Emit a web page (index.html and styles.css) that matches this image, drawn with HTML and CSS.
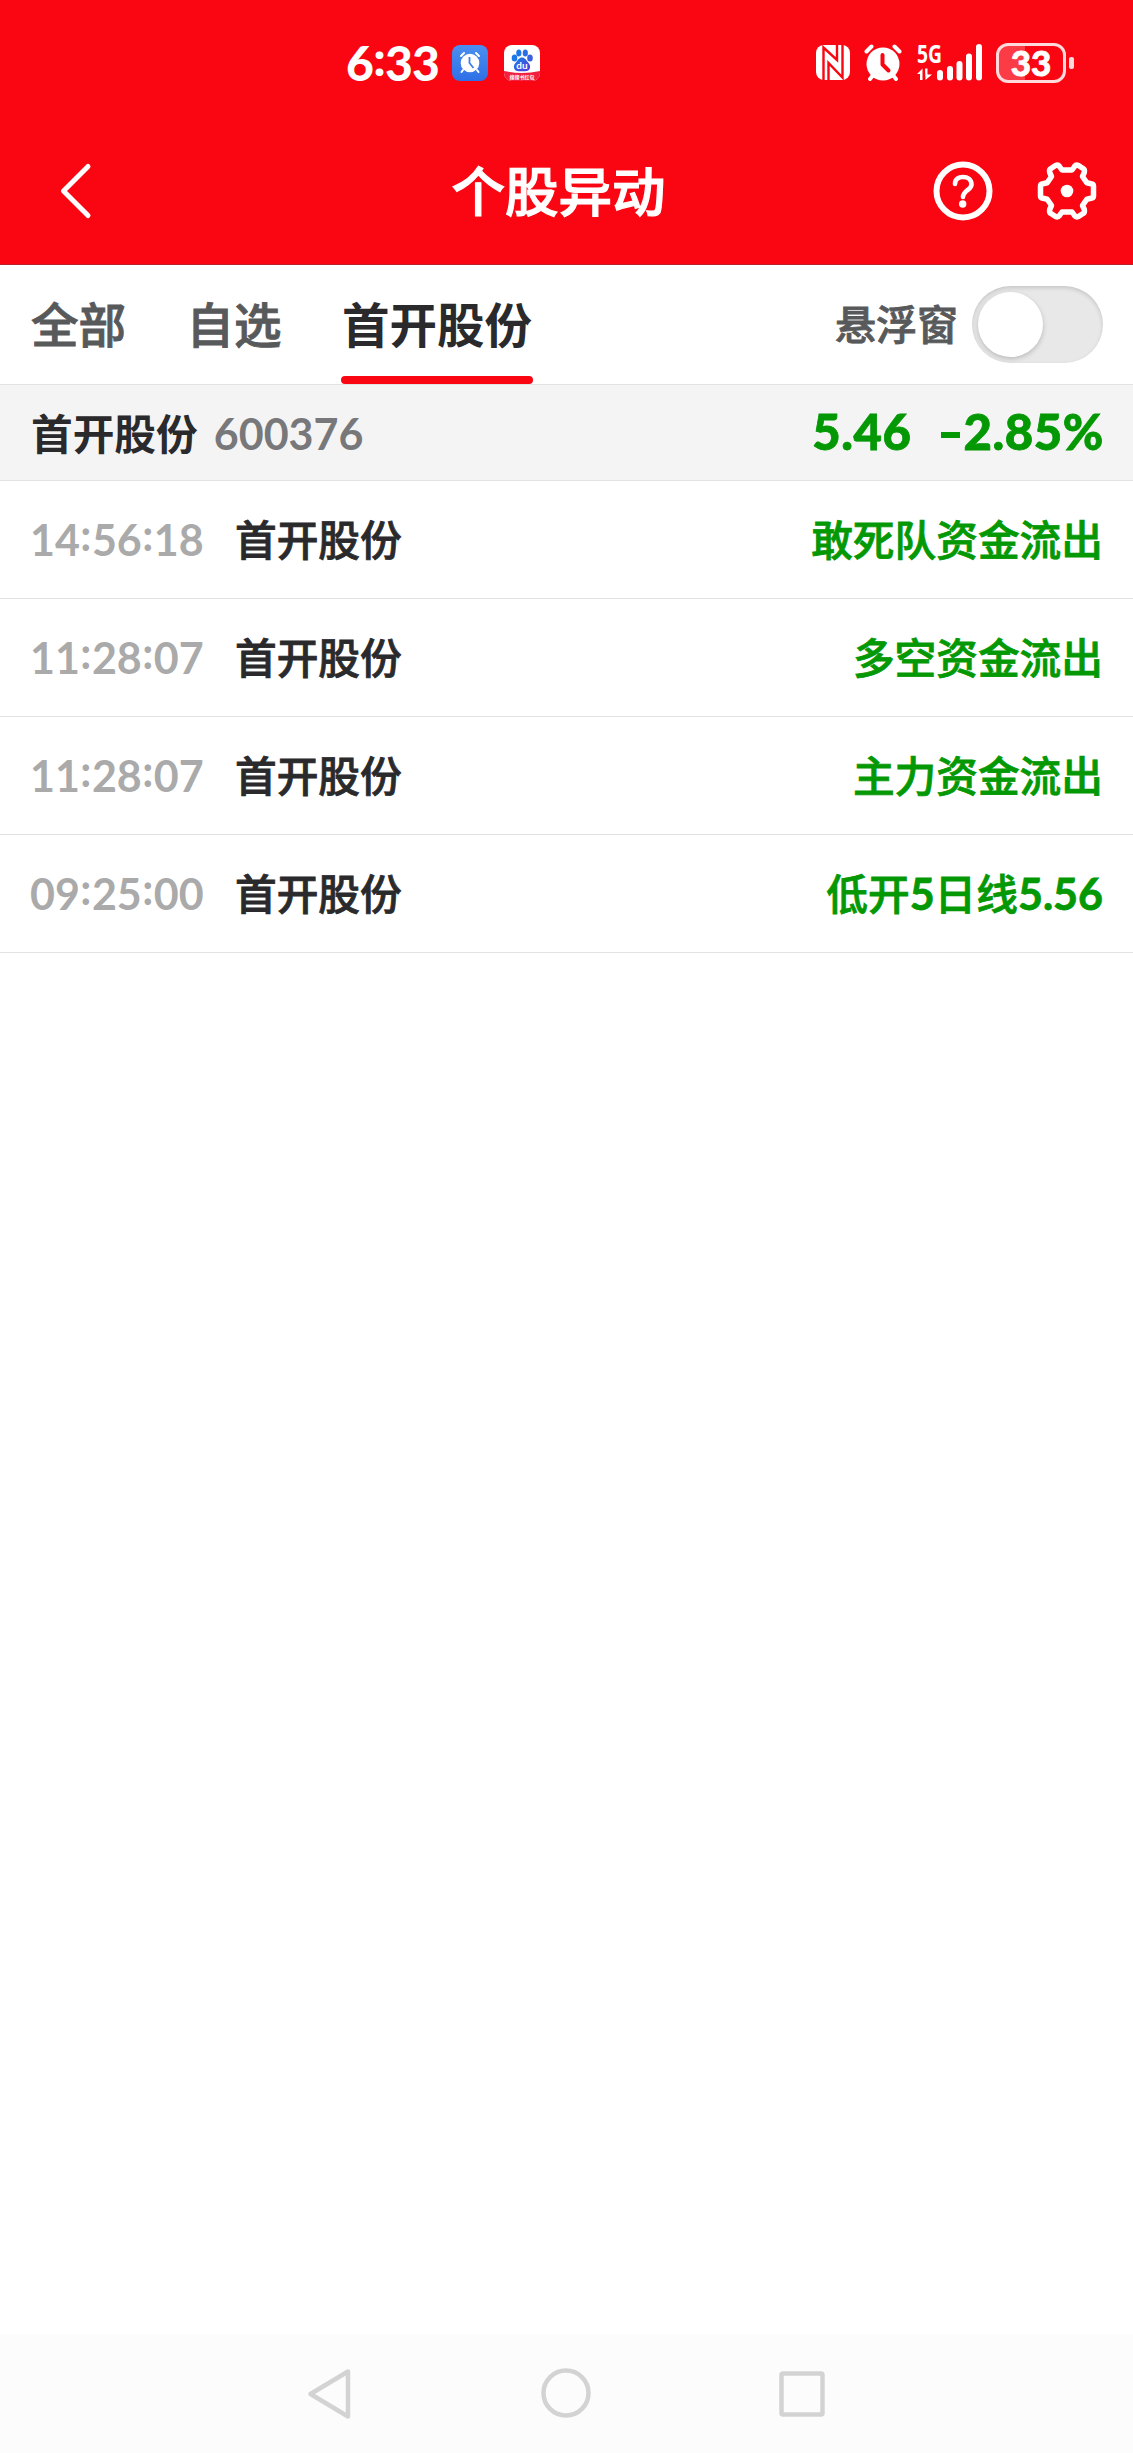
FILE: index.html
```html
<!DOCTYPE html>
<html lang="zh-CN">
<head>
    <meta charset="UTF-8">
    <meta name="viewport" content="width=device-width, initial-scale=1.0">
    <title>个股异动</title>
    <link rel="stylesheet" href="styles.css">
</head>
<body>
    <div class="page">
        <!-- Status bar -->
        <div class="status-bar">
            <div class="status-left">
                <span class="clock">6<i class="colon">:</i>33</span>
                <svg class="app-icon" width="36" height="36" viewBox="0 0 36 36">
                    <defs>
                        <linearGradient id="blue" x1="0" y1="0" x2="0" y2="1">
                            <stop offset="0" stop-color="#4b90f0"/>
                            <stop offset="1" stop-color="#2f6fe6"/>
                        </linearGradient>
                    </defs>
                    <rect width="36" height="36" rx="8" fill="url(#blue)"/>
                    <circle cx="18" cy="18" r="9.3" fill="#fff"/>
                    <path d="M9 11l3-3M27 11l-3-3M11 25l-1.5 2M25 25l1.5 2" stroke="#fff" stroke-width="2" stroke-linecap="round"/>
                    <path d="M17.5 12v6l4 5" fill="none" stroke="#3d80eb" stroke-width="1.8"/>
                </svg>
                <svg class="app-icon" width="36" height="36" viewBox="0 0 36 36">
                    <defs>
                        <clipPath id="round"><rect width="36" height="36" rx="8"/></clipPath>
                        <linearGradient id="paw" x1="0" y1="0" x2="1" y2="1">
                            <stop offset="0" stop-color="#1683e8"/>
                            <stop offset="1" stop-color="#5a35d8"/>
                        </linearGradient>
                    </defs>
                    <g clip-path="url(#round)">
                        <rect width="36" height="36" fill="#fff"/>
                        <path d="M0 26q18 4 36 0v10H0z" fill="#f2203f"/>
                        <ellipse cx="10.5" cy="13" rx="2.8" ry="3.5" fill="#1c78e8"/>
                        <ellipse cx="14.8" cy="8" rx="2.6" ry="3.6" fill="#1c78e8"/>
                        <ellipse cx="21.3" cy="8" rx="2.6" ry="3.6" fill="#2c6ee4"/>
                        <ellipse cx="26" cy="13" rx="2.8" ry="3.5" fill="#3a62e0"/>
                        <path d="M18 12.5c3 0 4 2.5 5.5 4.2 2 2 3 3.8 2.5 6-.6 3-3 3.6-8 3.6s-7.4-.6-8-3.6c-.5-2.2.5-4 2.5-6 1.5-1.7 2.5-4.2 5.5-4.2z" fill="url(#paw)"/>
                        <text class="paw-text" x="18" y="24">du</text>
                        <text class="paw-label" x="18" y="34">搜搜书红包</text>
                    </g>
                </svg>
            </div>
            <div class="status-right">
                <svg class="nfc" width="34" height="36" viewBox="0 0 34 36">
                    <rect width="34" height="35" rx="8" fill="#fff"/>
                    <path d="M7.5 35V2.5L21 15V0M26.5 0V32.5L12.500 18v17" fill="none" stroke="#fa0612" stroke-width="2.4"/>
                </svg>
                <svg class="alarm" width="38" height="38" viewBox="0 0 38 38">
                    <circle cx="19" cy="20" r="16.5" fill="#fff"/>
                    <path d="M2.5 7.5l5-5M35.5 7.5l-5-5M6 35l4-5M32 35l-4-5" stroke="#fff" stroke-width="4" stroke-linecap="round"/>
                    <path d="M18.5 11v9.5l6 6" fill="none" stroke="#fa0612" stroke-width="4" stroke-linecap="round" stroke-linejoin="round"/>
                </svg>
                <svg class="signal" width="66" height="38" viewBox="0 0 66 38">
                    <text class="signal-text" x="0" y="19" textLength="25" lengthAdjust="spacingAndGlyphs">5G</text>
                    <path d="M0 30l5.5-5.5V36H3V30zM8 24.5h2.5v6H15L8.5 36z" fill="#fff"/>
                    <path d="M23 29v4.5M33 25v8.5M42.5 20v13.5M52 12.5v21M62 3v30.5" stroke="#fff" stroke-width="6" stroke-linecap="round"/>
                </svg>
                <div class="battery"><span>33</span></div>
                <div class="battery-cap"></div>
            </div>
        </div>

        <!-- Title bar -->
        <div class="header">
            <svg class="back" width="36" height="60" viewBox="0 0 36 60">
                <path d="M30 5.5L5.5 30 30 54.5" fill="none" stroke="#fff" stroke-width="5" stroke-linecap="round" stroke-linejoin="round"/>
            </svg>
            <h1>个股异动</h1>
            <div class="header-icons">
                <svg width="60" height="60" viewBox="-30 -30 60 60">
                    <circle r="26.5" fill="none" stroke="#fff" stroke-width="6"/>
                    <path d="M-8-7C-8-12-4.5-14 0-14S8.5-11.5 8.5-6.5C8.5-1 0-.5 0 6" fill="none" stroke="#fff" stroke-width="4.6" stroke-linecap="round"/>
                    <circle cx="-.3" cy="13" r="3.7" fill="#fff"/>
                </svg>
                <svg width="60" height="60" viewBox="-30 -30 60 60">
                    <path d="M26.5-5Q26.500-7 24-7.300L19.800-8.200 15.500-14.500 17.300-18.500Q18-21.500 16-22.500L11.500-25.500Q9-26.500 7.500-24.500L5-21H-5L-7.500-24.500Q-9-26.500-11.500-25.500L-16-22.500Q-18-21.500-17.300-18.500L-15.500-14.500-19.800-8.200-24-7.300Q-26.500-7-26.500-5V5Q-26.500 7-24 7.300L-19.800 8.200-15.500 14.500-17.300 18.500Q-18 21.500-16 22.500L-11.500 25.500Q-9 26.500-7.500 24.500L-5 21H5L7.500 24.500Q9 26.500 11.500 25.500L16 22.500Q18 21.500 17.300 18.500L15.500 14.500 19.800 8.200 24 7.300Q26.500 7 26.500 5z" fill="none" stroke="#fff" stroke-width="5.5" stroke-linejoin="round"/>
                    <circle r="6.3" fill="#fff"/>
                </svg>
            </div>
        </div>

        <!-- Tabs -->
        <div class="tabs">
            <div class="tab">全部</div>
            <div class="tab">自选</div>
            <div class="tab active">首开股份</div>
            <div class="float-switch">
                <span>悬浮窗</span>
                <div class="toggle"><div class="knob"></div></div>
            </div>
        </div>

        <!-- Quote -->
        <div class="quote">
            <span class="quote-name">首开股份</span>
            <span class="quote-code">600376</span>
            <span class="quote-price">5.46</span>
            <span class="quote-change"><i class="minus"></i>2.85%</span>
        </div>

        <!-- Events -->
        <div class="list">
            <div class="row">
                <span class="time">14<i class="colon">:</i>56<i class="colon">:</i>18</span>
                <span class="name">首开股份</span>
                <span class="event">敢死队资金流出</span>
            </div>
            <div class="row">
                <span class="time">11<i class="colon">:</i>28<i class="colon">:</i>07</span>
                <span class="name">首开股份</span>
                <span class="event">多空资金流出</span>
            </div>
            <div class="row">
                <span class="time">11<i class="colon">:</i>28<i class="colon">:</i>07</span>
                <span class="name">首开股份</span>
                <span class="event">主力资金流出</span>
            </div>
            <div class="row">
                <span class="time">09<i class="colon">:</i>25<i class="colon">:</i>00</span>
                <span class="name">首开股份</span>
                <span class="event">低开<b>5</b>日线<b>5.56</b></span>
            </div>
        </div>

        <!-- System navigation -->
        <div class="nav-bar">
            <svg width="46" height="52" viewBox="0 0 46 52">
                <path d="M41 3.5V48.5L3.5 26z" />
            </svg>
            <svg width="52" height="52" viewBox="0 0 52 52">
                <circle cx="26" cy="25" r="22.5"/>
            </svg>
            <svg width="46" height="52" viewBox="0 0 46 52">
                <rect x="2.5" y="5.5" width="41" height="41" rx="1.5"/>
            </svg>
        </div>
    </div>
</body>
</html>
```

FILE: styles.css
```css
body {
    margin: 0;
    font-family: Lato, "Noto Sans CJK SC", sans-serif;
    background-color: #fff;
    color: #2a2a2c;
}
.page {
    display: flex;
    flex-direction: column;
    height: 2453px;
}
svg {
    display: block;
}
i {
    font-style: normal;
}
.colon {
    display: inline-block;
    position: relative;
    top: -5px;
    width: 12px;
    text-align: center;
}

/* Status bar */
.status-bar {
    display: flex;
    justify-content: space-between;
    box-sizing: border-box;
    height: 117px;
    padding: 42px 59px 0 346px;
    background-color: #fa0612;
    color: #fff;
}
.status-left,
.status-right {
    display: flex;
    align-items: center;
    height: 42px;
}
.clock {
    width: 106px;
    font-size: 48px;
    font-weight: 900;
    line-height: 42px;
    letter-spacing: -0.8px;
    white-space: nowrap;
}
.app-icon {
    margin-right: 16px;
}
.paw-text {
    font-size: 10px;
    font-weight: 700;
    fill: #fff;
    text-anchor: middle;
}
.paw-label {
    font-size: 5px;
    font-weight: 700;
    fill: #fff;
    text-anchor: middle;
}
.nfc {
    margin-right: 14px;
}
.alarm {
    margin-right: 15px;
}
.signal {
    margin-right: 13px;
    overflow: visible;
}
.signal-text {
    font-family: "Open Sans", sans-serif;
    font-size: 25px;
    font-weight: 700;
    fill: #fff;
}
.battery {
    box-sizing: border-box;
    width: 70px;
    height: 40px;
    border: 3px solid #ffd9dc;
    border-radius: 12px;
    background: linear-gradient(90deg, #fb3c46 26px, transparent 26px);
    font-size: 35px;
    font-weight: 900;
    line-height: 32px;
    text-align: center;
    -webkit-text-stroke: 0.8px;
}
.battery-cap {
    width: 5px;
    height: 12px;
    margin-left: 3px;
    border-radius: 2px;
    background-color: #ffd9dc;
}

/* Title bar */
.header {
    display: flex;
    align-items: center;
    justify-content: space-between;
    height: 147px;
    padding: 0 36px 0 58px;
    border-bottom: 1px solid #b8222b;
    background-color: #fa0612;
    color: #fff;
}
.header h1 {
    margin: 0 0 0 90px;
    font-size: 53.5px;
    font-weight: 500;
    line-height: 60px;
    -webkit-text-stroke: 1.2px;
}
.header-icons {
    display: flex;
    gap: 44px;
}

/* Tabs */
.tabs {
    display: flex;
    height: 119px;
    padding: 0 30px 0 31px;
    border-bottom: 1px solid #e2e2e2;
}
.tab {
    margin-right: 60.5px;
    font-size: 47.5px;
    font-weight: 500;
    line-height: 119px;
    color: #58595b;
    -webkit-text-stroke: 0.9px;
}
.tab.active {
    position: relative;
    color: #2a2a2c;
    font-weight: 700;
    -webkit-text-stroke: 0;
}
.tab.active::after {
    content: "";
    position: absolute;
    left: -1px;
    right: -1px;
    bottom: 0;
    height: 8px;
    border-radius: 4px;
    background-color: #fa0612;
}
.float-switch {
    display: flex;
    align-items: center;
    margin-left: auto;
    gap: 14px;
    font-size: 41px;
    font-weight: 500;
    line-height: 56px;
    color: #58595b;
    -webkit-text-stroke: 0.8px;
}
.toggle {
    box-sizing: border-box;
    width: 131px;
    height: 77px;
    padding: 6px;
    border-radius: 39px;
    background-color: #e8e8e8;
    box-shadow: inset 0 2px 4px rgba(0, 0, 0, 0.15);
}
.knob {
    width: 65px;
    height: 65px;
    border-radius: 50%;
    background-color: #fff;
    box-shadow: 0 2px 5px rgba(0, 0, 0, 0.2);
}

/* Quote */
.quote {
    display: flex;
    align-items: baseline;
    height: 95px;
    padding: 0 29px 0 31px;
    border-bottom: 1px solid #e2e2e2;
    background-color: #f4f4f4;
    line-height: 93px;
}
.quote-name {
    font-size: 41.7px;
    font-weight: 700;
}
.quote-code {
    margin-left: 16px;
    font-size: 43px;
    font-weight: 700;
    color: #78787a;
}
.quote-price,
.quote-change {
    font-size: 49px;
    font-weight: 900;
    letter-spacing: 0.6px;
    color: #049804;
    -webkit-text-stroke: 0.8px;
}
.quote-price {
    margin-left: auto;
}
.quote-change {
    margin-left: 29px;
}
.minus {
    display: inline-block;
    width: 19px;
    height: 6px;
    margin-right: 4px;
    vertical-align: 12px;
    background-color: #049804;
}

/* Events */
.row {
    display: flex;
    align-items: baseline;
    height: 117px;
    padding: 0 30px;
    border-bottom: 1px solid #e2e2e2;
    line-height: 117px;
    font-size: 41.7px;
    font-weight: 500;
}
.name,
.event {
    -webkit-text-stroke: 0.8px;
}
.time {
    width: 205px;
    font-size: 43px;
    font-weight: 700;
    color: #aaaaaa;
}
.event {
    margin-left: auto;
    color: #049804;
}
.event b {
    font-size: 43px;
}

/* System navigation */
.nav-bar {
    display: flex;
    justify-content: space-between;
    box-sizing: border-box;
    height: 119px;
    margin-top: auto;
    padding: 34px 308px 0 307px;
    background-color: #fcfcfc;
}
.nav-bar svg {
    fill: none;
    stroke: #d3d3d3;
    stroke-width: 4.5;
    stroke-linejoin: round;
}
```
